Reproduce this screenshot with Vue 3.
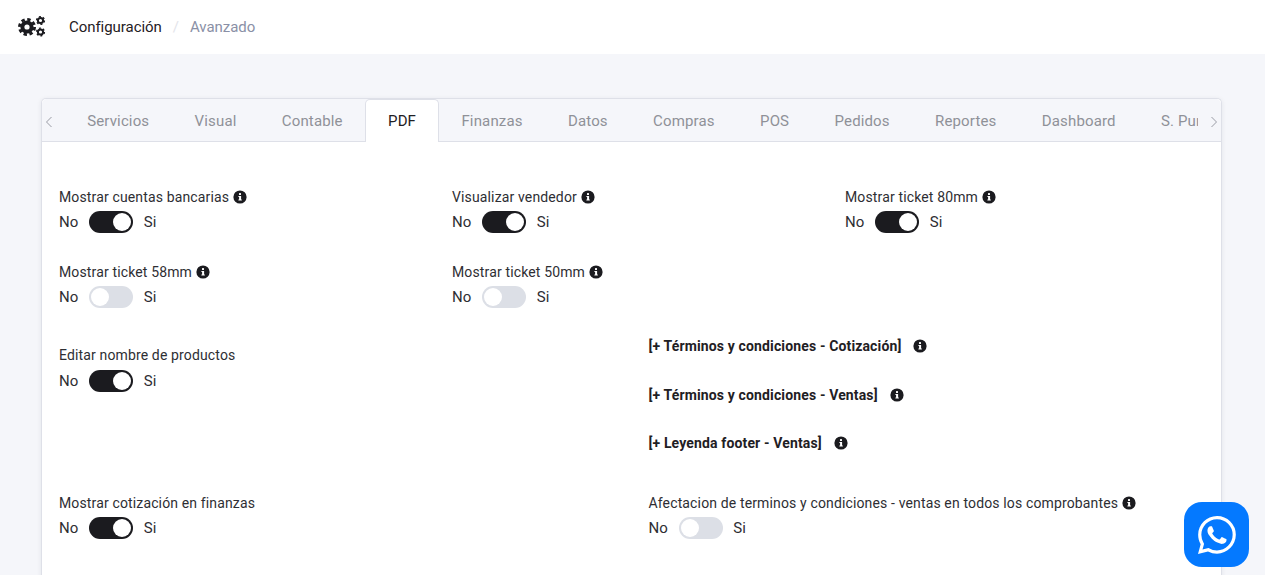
<template>
  <div class="page">
    <header class="topbar">
      <svg class="cogs" viewBox="0 0 28 24" width="28" height="24">
        <circle cx="9" cy="12" r="6.6" fill="#1b1b1f" />
        <circle cx="9" cy="12" r="7.6" fill="none" stroke="#1b1b1f" stroke-width="2.8" stroke-dasharray="3.4 2.57" />
        <circle cx="9" cy="12" r="2.6" fill="#fff" />
        <circle cx="22.5" cy="5.5" r="2.6" fill="none" stroke="#1b1b1f" stroke-width="2" />
        <circle cx="22.5" cy="5.5" r="3.9" fill="none" stroke="#1b1b1f" stroke-width="1.4" stroke-dasharray="2 2.08" />
        <circle cx="22.5" cy="17" r="2.6" fill="none" stroke="#1b1b1f" stroke-width="2" />
        <circle cx="22.5" cy="17" r="3.9" fill="none" stroke="#1b1b1f" stroke-width="1.4" stroke-dasharray="2 2.08" />
      </svg>
      <span class="crumb">Configuración</span>
      <span class="slash">/</span>
      <span class="crumb-muted">Avanzado</span>
    </header>

    <main class="content">
      <section class="card">
        <div class="tabs">
          <svg class="arrow" viewBox="0 0 8 12" width="8" height="12">
            <path d="M6.5 1 1.5 6l5 5" fill="none" stroke="#9a9ca5" stroke-width="1" />
          </svg>
          <div class="tabs-scroll">
            <div
              v-for="tab in tabs"
              :key="tab"
              class="tab"
              :class="{ active: tab === 'PDF' }"
            >
              {{ tab }}
            </div>
          </div>
          <svg class="arrow" viewBox="0 0 8 12" width="8" height="12">
            <path d="M1.5 1 6.5 6l-5 5" fill="none" stroke="#9a9ca5" stroke-width="1" />
          </svg>
        </div>

        <div class="body">
          <div class="thirds">
            <div v-for="item in switches" :key="item.label" class="field">
              <div class="label">
                {{ item.label }}
                <svg class="info" viewBox="0 0 14 14" width="14" height="14">
                  <circle cx="7" cy="7" r="6.6" fill="#1b1b1f" />
                  <rect x="6" y="2.9" width="2" height="2" rx=".5" fill="#fff" />
                  <path d="M5.4 6h2.7v3.5h.7v1.1H5.4V9.5h.7V7.1h-.7z" fill="#fff" />
                </svg>
              </div>
              <div class="toggle-row">
                <span>No</span>
                <span class="switch" :class="{ on: item.on }"><i></i></span>
                <span>Si</span>
              </div>
            </div>
          </div>

          <div class="halves middle">
            <div class="field">
              <div class="label name-label">Editar nombre de productos</div>
              <div class="toggle-row">
                <span>No</span>
                <span class="switch on"><i></i></span>
                <span>Si</span>
              </div>
            </div>
            <div class="links">
              <div v-for="link in links" :key="link" class="link">
                <strong>{{ link }}</strong>
                <svg class="info" viewBox="0 0 14 14" width="14" height="14">
                  <circle cx="7" cy="7" r="6.6" fill="#1b1b1f" />
                  <rect x="6" y="2.9" width="2" height="2" rx=".5" fill="#fff" />
                  <path d="M5.4 6h2.7v3.5h.7v1.1H5.4V9.5h.7V7.1h-.7z" fill="#fff" />
                </svg>
              </div>
            </div>
          </div>

          <div class="halves">
            <div class="field">
              <div class="label">Mostrar cotización en finanzas</div>
              <div class="toggle-row">
                <span>No</span>
                <span class="switch on"><i></i></span>
                <span>Si</span>
              </div>
            </div>
            <div class="field">
              <div class="label">
                Afectacion de terminos y condiciones - ventas en todos los comprobantes
                <svg class="info" viewBox="0 0 14 14" width="14" height="14">
                  <circle cx="7" cy="7" r="6.6" fill="#1b1b1f" />
                  <rect x="6" y="2.9" width="2" height="2" rx=".5" fill="#fff" />
                  <path d="M5.4 6h2.7v3.5h.7v1.1H5.4V9.5h.7V7.1h-.7z" fill="#fff" />
                </svg>
              </div>
              <div class="toggle-row">
                <span>No</span>
                <span class="switch"><i></i></span>
                <span>Si</span>
              </div>
            </div>
          </div>
        </div>
      </section>
    </main>

    <a class="whatsapp">
      <svg viewBox="0 0 16 16" width="38" height="38" fill="#fff">
        <path d="M13.601 2.326A7.854 7.854 0 0 0 7.994 0C3.627 0 .068 3.558.064 7.926c0 1.399.366 2.76 1.057 3.965L0 16l4.204-1.102a7.933 7.933 0 0 0 3.79.965h.004c4.368 0 7.926-3.558 7.93-7.93A7.898 7.898 0 0 0 13.6 2.326zM7.994 14.521a6.573 6.573 0 0 1-3.356-.92l-.24-.144-2.494.654.666-2.433-.156-.251a6.56 6.56 0 0 1-1.007-3.505c0-3.626 2.957-6.584 6.591-6.584a6.56 6.56 0 0 1 4.66 1.931 6.557 6.557 0 0 1 1.928 4.66c-.004 3.639-2.961 6.592-6.592 6.592zm3.615-4.934c-.197-.099-1.17-.578-1.353-.646-.182-.065-.315-.099-.445.099-.133.197-.513.646-.627.775-.114.133-.232.148-.43.05-.197-.1-.836-.308-1.592-.985-.59-.525-.985-1.175-1.103-1.372-.114-.198-.011-.304.088-.403.087-.088.197-.232.296-.346.1-.114.133-.198.198-.33.065-.134.034-.248-.015-.347-.05-.099-.445-1.076-.612-1.47-.16-.389-.323-.335-.445-.34-.114-.007-.247-.007-.38-.007a.729.729 0 0 0-.529.247c-.182.198-.691.677-.691 1.654 0 .977.71 1.916.81 2.049.098.133 1.394 2.132 3.383 2.992.47.205.84.326 1.129.418.475.152.904.129 1.246.08.38-.058 1.171-.48 1.338-.943.164-.464.164-.86.114-.943-.05-.084-.182-.133-.38-.232z" />
      </svg>
    </a>
  </div>
</template>

<script setup>
const tabs = [
  'Servicios',
  'Visual',
  'Contable',
  'PDF',
  'Finanzas',
  'Datos',
  'Compras',
  'POS',
  'Pedidos',
  'Reportes',
  'Dashboard',
  'S. Punto',
]

const switches = [
  { label: 'Mostrar cuentas bancarias', on: true },
  { label: 'Visualizar vendedor', on: true },
  { label: 'Mostrar ticket 80mm', on: true },
  { label: 'Mostrar ticket 58mm', on: false },
  { label: 'Mostrar ticket 50mm', on: false },
]

const links = [
  '[+ Términos y condiciones - Cotización]',
  '[+ Términos y condiciones - Ventas]',
  '[+ Leyenda footer - Ventas]',
]
</script>

<style>
html,
body {
  margin: 0;
  height: 100%;
  overflow: hidden;
  background: #f5f6fa;
}
</style>

<style scoped>
.page {
  height: 575px;
  overflow: hidden;
  position: relative;
  background: #f5f6fa;
  font-family: Roboto, "Liberation Sans", sans-serif;
  font-size: 14px;
  letter-spacing: 0.14px;
  color: #2e2e33;
}

.topbar {
  height: 54px;
  background: #fff;
  display: flex;
  align-items: center;
  padding-left: 18px;
  box-sizing: border-box;
  font-size: 15px;
  letter-spacing: -0.05px;
}

.cogs {
  margin-right: 23px;
}

.crumb {
  color: #1f2024;
}

.slash {
  color: #e3e4ea;
  margin: 0 11px;
}

.crumb-muted {
  color: #8a90a6;
}

.content {
  padding: 44px 43px 0 41px;
}

.card {
  background: #fff;
  border: 1px solid #dee0e8;
  border-bottom: 0;
  border-radius: 5px 5px 0 0;
  box-shadow: 0 1px 5px rgba(30, 32, 50, 0.08);
  height: 500px;
  box-sizing: border-box;
}

.tabs {
  height: 43px;
  display: flex;
  align-items: center;
  background: #f5f6fa;
  border-bottom: 1px solid #dee0e8;
  border-radius: 5px 5px 0 0;
  box-sizing: border-box;
  padding: 0 3px;
}

.arrow {
  flex: none;
  margin-top: 4px;
}

.tabs-scroll {
  flex: 1;
  min-width: 0;
  display: flex;
  overflow: hidden;
  height: 43px;
  padding-left: 11.5px;
  margin-right: 12px;
}

.tab {
  flex: none;
  padding: 0 22.7px;
  height: 43px;
  line-height: 44px;
  font-size: 15px;
  color: #8f9198;
  box-sizing: border-box;
}

.active {
  background: #fff;
  color: #1f2024;
  border: 1px solid #dee0e8;
  border-bottom: 0;
  border-radius: 5px 5px 0 0;
  padding: 0 21.7px;
  line-height: 42px;
}

.body {
  padding: 47px 17px 0;
}

.thirds {
  display: grid;
  grid-template-columns: repeat(3, 393px);
}

.field {
  height: 75px;
}

.label {
  display: flex;
  align-items: center;
  gap: 4px;
  height: 16px;
  line-height: 16px;
  margin-bottom: 6px;
}

.name-label {
  margin-bottom: 7px;
}

.toggle-row {
  display: flex;
  align-items: center;
  height: 22px;
  font-size: 15px;
  letter-spacing: 0;
}

.switch {
  width: 44px;
  height: 22px;
  border-radius: 11px;
  background: #dcdfe6;
  position: relative;
  flex: none;
  margin: 0 10.5px 0 11px;
}

.switch i {
  position: absolute;
  top: 2px;
  left: 2px;
  width: 18px;
  height: 18px;
  border-radius: 50%;
  background: #fff;
}

.switch.on {
  background: #1b1b1f;
}

.switch.on i {
  left: 24px;
}

.halves {
  display: grid;
  grid-template-columns: 589.5px 1fr;
}

.middle {
  margin-top: 8px;
  height: 148px;
}

.links {
  margin-top: -9px;
}

.link {
  display: flex;
  align-items: center;
  gap: 12px;
  height: 16px;
  margin-bottom: 32.5px;
}

.link strong {
  font-weight: 700;
  color: #1f2024;
}

.whatsapp {
  position: absolute;
  left: 1184px;
  top: 502px;
  width: 65px;
  height: 65px;
  border-radius: 18px;
  background: #0479ff;
  display: flex;
  align-items: center;
  justify-content: center;
}
</style>
